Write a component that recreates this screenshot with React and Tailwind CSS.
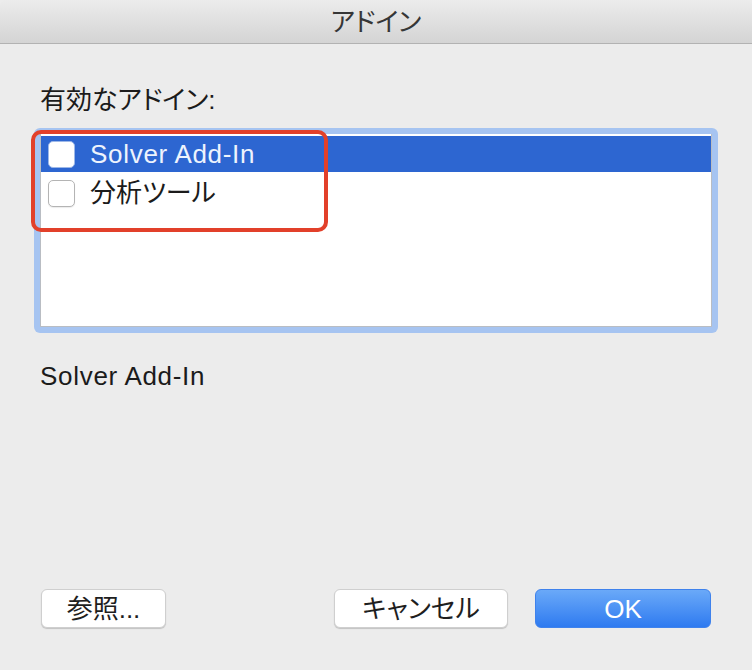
import React from "react";

const FONT = "[font-family:'Liberation_Sans','Noto_Sans_CJK_JP',sans-serif] [font-feature-settings:'palt']";

const ITEMS = [
  { id: "solver", label: "Solver Add-In", latin: true, selected: true },
  { id: "analysis", label: "分析ツール", latin: false, selected: false },
];

function Casilla({ selected }) {
  return (
    <span
      className={`w-[27px] h-[27px] rounded-[5px] bg-white flex-shrink-0 border ${
        selected ? "border-[#9db8e8]" : "border-[#b4b4b4] shadow-[0_1px_1px_rgba(0,0,0,0.08)]"
      }`}
    />
  );
}

function Boton({ children, primary, className = "" }) {
  return (
    <button
      className={`h-[39px] rounded-[6px] text-[26px] leading-none flex items-center justify-center ${
        primary
          ? "bg-gradient-to-b from-[#6aa9f8] to-[#2e7af0] border border-[#3f82ec] text-white"
          : "bg-white border border-[#cfcfcf] text-[#1e1e1e] shadow-[0_1px_1px_rgba(0,0,0,0.18)]"
      } ${className}`}
    >
      {children}
    </button>
  );
}

export default function App() {
  return (
    <div className={`w-[752px] h-[670px] bg-[#ececec] flex flex-col overflow-hidden ${FONT}`}>
      {/* Barra de título */}
      <div className="h-[44px] flex-shrink-0 bg-gradient-to-b from-[#ececec] to-[#d4d4d4] border-b border-[#b2b2b2] flex items-center justify-center rounded-t-[6px]">
        <span className="text-[26px] text-[#363636] leading-none">アドイン</span>
      </div>

      <div className="flex-1 flex flex-col px-[40px] pt-[41px] pb-[42px]">
        <div className="text-[26px] leading-[30px] text-[#1b1b1b]">有効なアドイン:</div>

        {/* Lista con anillo de foco */}
        <div className="relative mt-[13px] -mx-[6px] h-[205px] rounded-[6px] bg-[#a6c4f1] p-[6px]">
          <div className="h-full bg-white border border-[#b9bdc3] border-t-0 flex flex-col gap-[3px] pt-[2px]">
            {ITEMS.map(it => (
              <div
                key={it.id}
                className={`h-[36px] flex items-center gap-[15px] pl-[7px] text-[26px] leading-none ${
                  it.selected ? "bg-[#2d66d1] text-[#eef3fd]" : "text-[#1b1b1b]"
                }`}
              >
                <Casilla selected={it.selected} />
                <span className={it.latin ? "tracking-[0.7px]" : ""}>{it.label}</span>
              </div>
            ))}
          </div>
          {/* marco rojo de resaltado */}
          <div className="absolute -left-[3px] top-[2px] w-[297px] h-[102px] border-[4px] border-[#e2402a] rounded-[10px] pointer-events-none" />
        </div>

        <div className="mt-[28px] text-[26px] leading-[30px] text-[#1b1b1b] tracking-[0.7px]">Solver Add-In</div>

        <div className="flex-1" />

        <div className="flex items-center">
          <Boton className="w-[125px] ml-[1px]">参照...</Boton>
          <div className="flex-1" />
          <Boton className="w-[174px]">キャンセル</Boton>
          <Boton primary className="w-[176px] ml-[27px] mr-[1px]">OK</Boton>
        </div>
      </div>
    </div>
  );
}
